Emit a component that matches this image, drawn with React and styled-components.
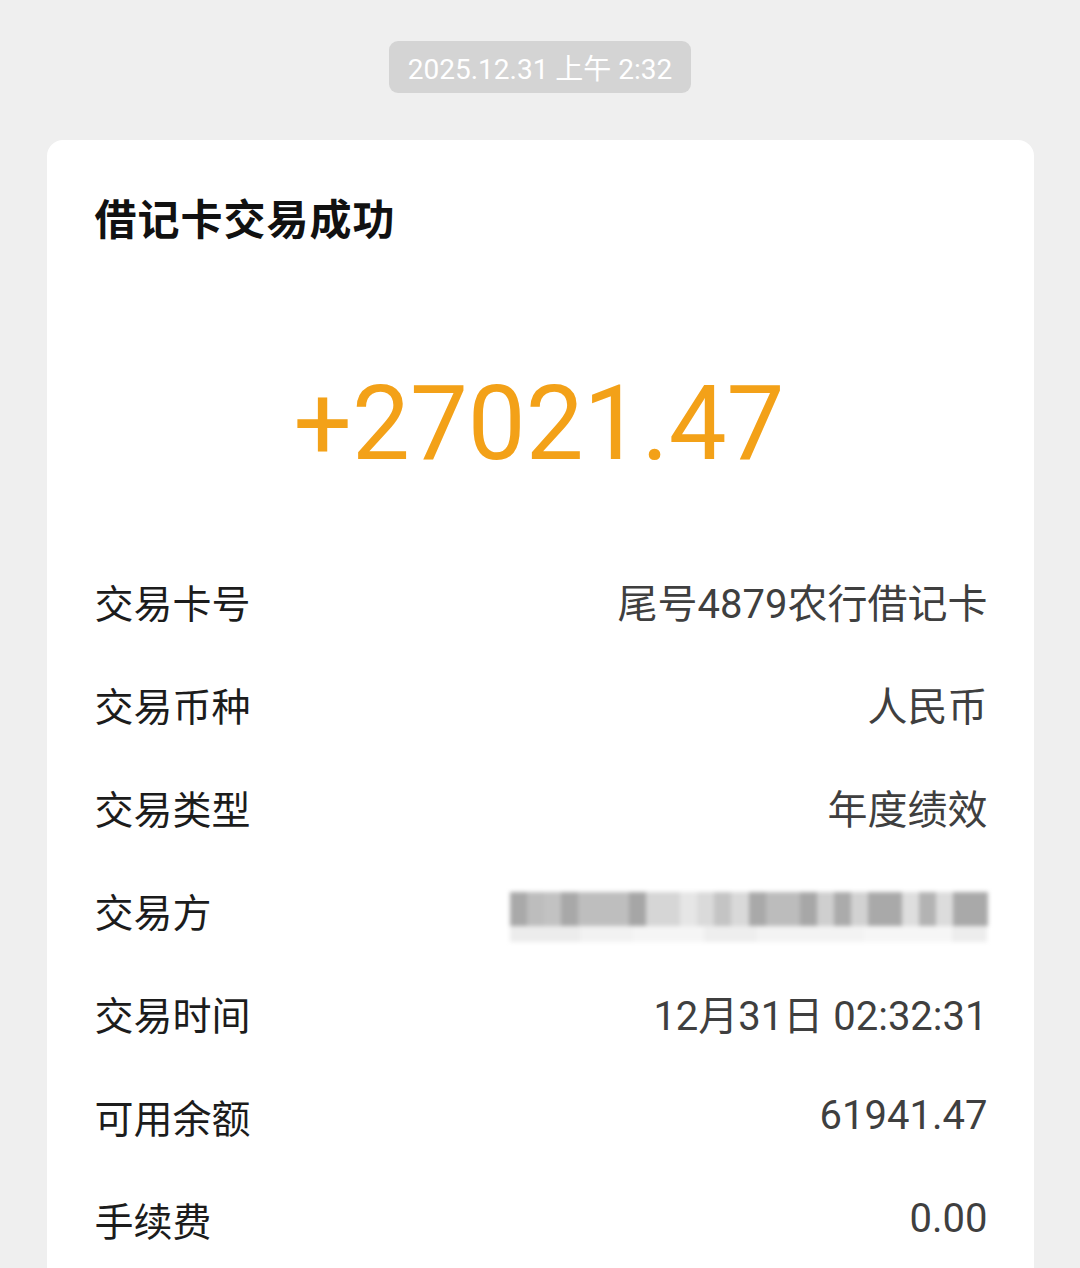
import React from 'react';
import styled, { createGlobalStyle } from 'styled-components';

const GlobalStyle = createGlobalStyle`
  html, body {
    margin: 0;
    padding: 0;
    background: #efefef;
    font-family: Roboto, "Noto Sans CJK SC", sans-serif;
  }
`;

const Page = styled.div`
  width: 1080px;
  height: 1268px;
  overflow: hidden;
  display: flex;
  flex-direction: column;
  align-items: center;
  padding-top: 41px;
  box-sizing: border-box;
`;

const TimePill = styled.div`
  flex: none;
  height: 52px;
  width: 302px;
  border-radius: 9px;
  background: #d4d4d4;
  color: #fff;
  font-size: 28px;
  display: flex;
  align-items: center;
  justify-content: center;
`;

const Card = styled.div`
  margin-top: 47px;
  width: 987px;
  flex: 1;
  background: #fff;
  border-radius: 16px 16px 0 0;
  padding: 51px 46px 0 48px;
  box-sizing: border-box;
`;

const Title = styled.h1`
  margin: 0;
  font-size: 42px;
  line-height: 60px;
  font-weight: 700;
  color: #111;
  letter-spacing: 1px;
`;

const Amount = styled.div`
  margin-top: 113px;
  text-align: center;
  font-size: 103px;
  line-height: 120px;
  font-weight: 400;
  color: #f3a118;
  padding-right: 4px;
`;

const Rows = styled.div`
  margin-top: 65px;
  display: flex;
  flex-direction: column;
`;

const Row = styled.div`
  height: 103px;
  display: flex;
  align-items: center;
  justify-content: space-between;
`;

const Label = styled.span`
  font-size: 39px;
  color: #1c1c1c;
`;

const Value = styled.span`
  font-size: 40px;
  color: #3f3f3f;
`;

const Blur = styled.div`
  display: flex;
  flex-direction: column;
  width: 478px;
  filter: blur(2px);
  margin-top: 14px;
`;

const BlurLine = styled.div`
  display: flex;
  height: ${(p) => p.h}px;
`;

const Block = styled.div`
  flex: ${(p) => p.w};
  background: ${(p) => p.c};
`;

const topBlocks = [
  [1, '#a9a9a9'], [1, '#bdbdbd'], [1, '#c2c2c2'], [1, '#a8a8a8'], [3, '#bebebe'],
  [1, '#a6a6a6'], [2, '#d6d6d6'], [1, '#e6e6e6'], [1, '#dadada'], [1, '#c4c4c4'],
  [1, '#d9d9d9'], [1, '#a9a9a9'], [2, '#bcbcbc'], [1, '#a7a7a7'], [1, '#cfcfcf'],
  [1, '#ababab'], [1, '#d2d2d2'], [2, '#a9a9a9'], [1, '#dedede'], [1, '#b3b3b3'],
  [1, '#dcdcdc'], [2, '#a9a9a9'],
];

const bottomBlocks = [
  [4, '#ececec'], [3, '#f2f2f2'], [4, '#f5f5f5'], [3, '#eeeeee'], [6, '#f3f3f3'],
  [5, '#f6f6f6'], [2, '#ededed'],
];

const rows = [
  ['交易卡号', '尾号4879农行借记卡'],
  ['交易币种', '人民币'],
  ['交易类型', '年度绩效'],
  ['交易方', null],
  ['交易时间', '12月31日 02:32:31'],
  ['可用余额', '61941.47'],
  ['手续费', '0.00'],
];

const Blurred = () => (
  <Blur>
    <BlurLine h={34}>
      {topBlocks.map(([w, c], i) => <Block key={i} w={w} c={c} />)}
    </BlurLine>
    <BlurLine h={16}>
      {bottomBlocks.map(([w, c], i) => <Block key={i} w={w} c={c} />)}
    </BlurLine>
  </Blur>
);

const App = () => (
  <Page>
    <GlobalStyle />
    <TimePill>2025.12.31 上午 2:32</TimePill>
    <Card>
      <Title>借记卡交易成功</Title>
      <Amount>+27021.47</Amount>
      <Rows>
        {rows.map(([label, value]) => (
          <Row key={label}>
            <Label>{label}</Label>
            {value ? <Value>{value}</Value> : <Blurred />}
          </Row>
        ))}
      </Rows>
    </Card>
  </Page>
);

export default App;
